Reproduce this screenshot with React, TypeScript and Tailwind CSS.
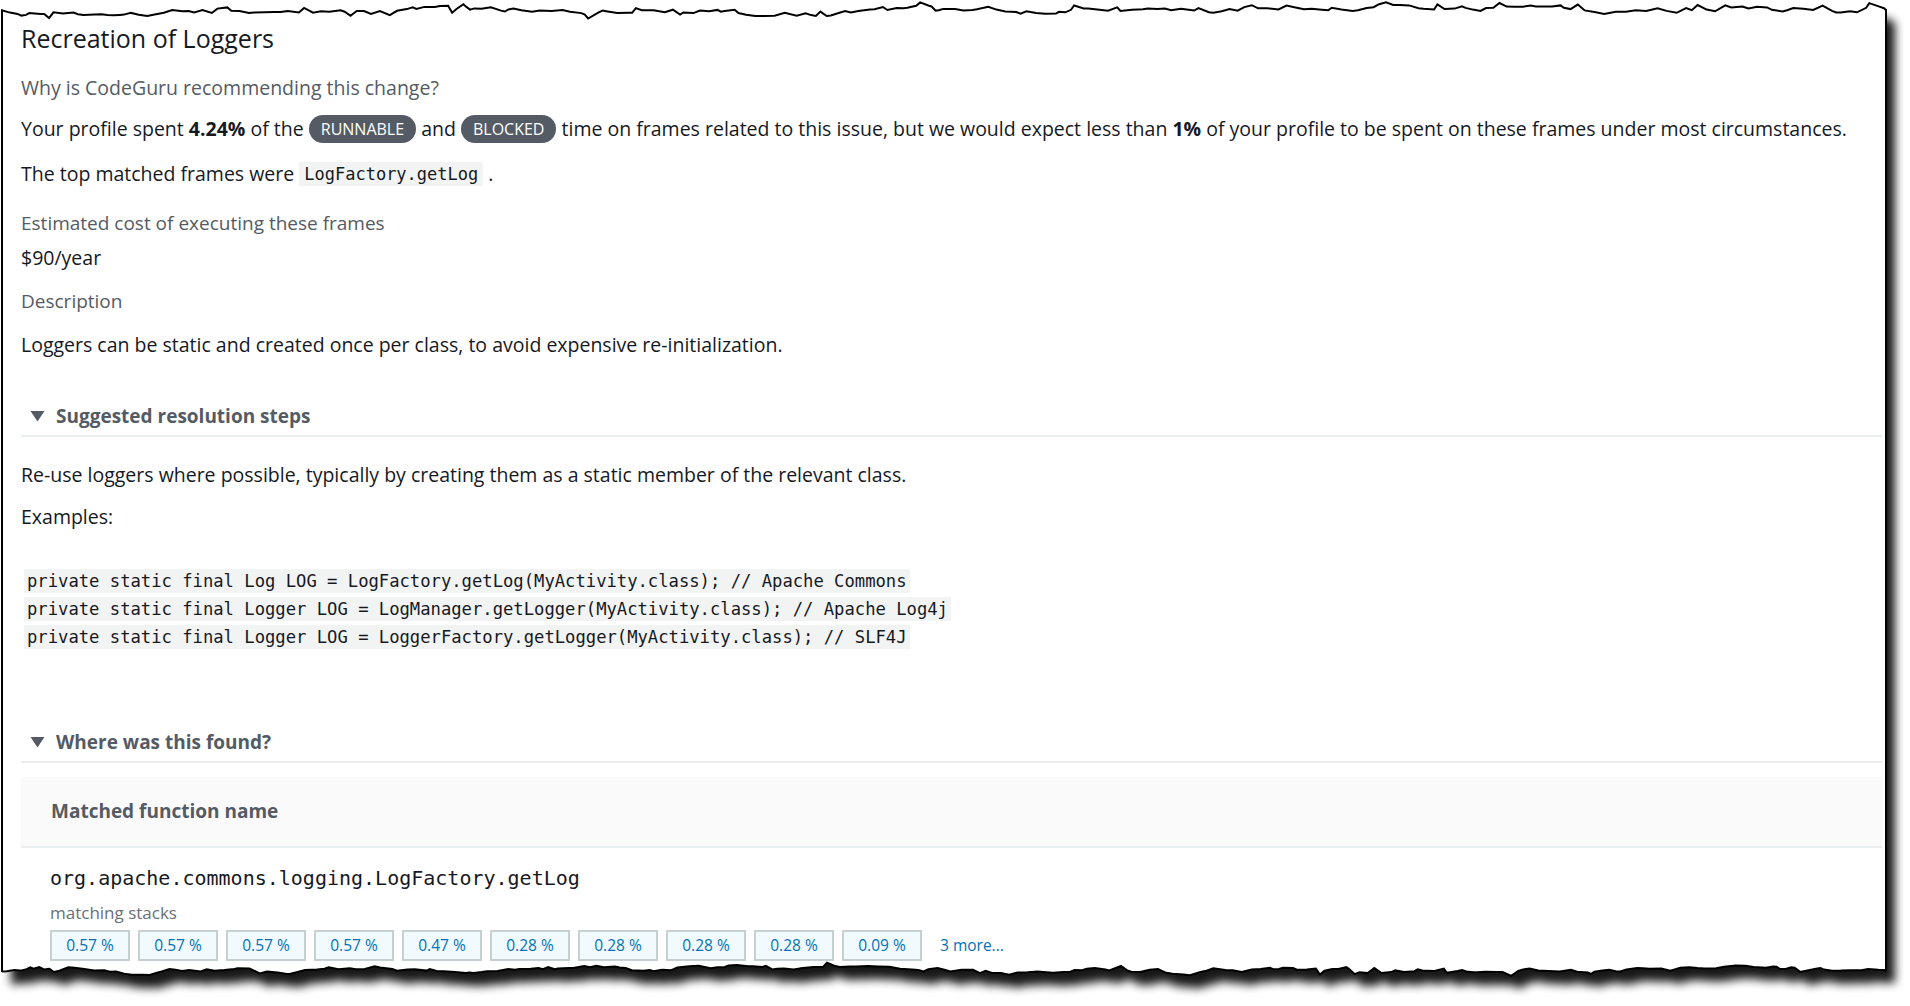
import React from "react";

function rng(seed: number) {
  let s = seed;
  return () => {
    s = (s * 1103515245 + 12345) % 2147483648;
    return s / 2147483648;
  };
}

function jagged(x0: number, x1: number, base: number, amp: number, seed: number) {
  const r = rng(seed);
  const pts: [number, number][] = [];
  let x = x0;
  let drift = 0;
  while (x < x1) {
    drift += (r() - 0.5) * amp * 0.9;
    drift = Math.max(-amp, Math.min(amp, drift * 0.85));
    const spike = r() < 0.18 ? (r() - 0.5) * amp * 1.6 : 0;
    pts.push([x, base + drift + spike]);
    x += 3 + r() * 9;
  }
  pts.push([x1, base]);
  return pts;
}

const TOP = jagged(2, 1886, 10, 6, 7);
const BOTTOM = jagged(2, 1886, 970, 5, 31);

function paperPath() {
  const top = TOP.map(([x, y]) => `${x.toFixed(1)},${y.toFixed(1)}`).join(" L");
  const bottom = [...BOTTOM]
    .reverse()
    .map(([x, y]) => `${x.toFixed(1)},${y.toFixed(1)}`)
    .join(" L");
  return `M2,12 L${top} L1886,11 L1886,972 L${bottom} L2,972 Z`;
}

function TornPaper() {
  const d = paperPath();
  return (
    <svg className="absolute inset-0" width={1910} height={1006} viewBox="0 0 1910 1006">
      <defs>
        <filter id="sh" x="-5%" y="-5%" width="110%" height="115%">
          <feGaussianBlur stdDeviation="5" />
        </filter>
      </defs>
      <path d={d} fill="#000" opacity="0.9" transform="translate(9,13)" filter="url(#sh)" />
      <path d={d} fill="#fff" stroke="#000" strokeWidth="2" strokeLinejoin="miter" />
    </svg>
  );
}

const pcts = ["0.57 %", "0.57 %", "0.57 %", "0.57 %", "0.47 %", "0.28 %", "0.28 %", "0.28 %", "0.28 %", "0.09 %"];

const mono = "font-['DejaVu_Sans_Mono','Liberation_Mono',monospace]";

function Tri() {
  return (
    <svg width="15" height="12" viewBox="0 0 15 12">
      <path d="M0.5 1 L14.5 1 L7.5 11.5 Z" fill="#545b64" />
    </svg>
  );
}

export default function App() {
  return (
    <div className="relative w-[1910px] h-[1006px] overflow-hidden bg-white font-['Open_Sans',sans-serif] text-[#16191f]">
      <TornPaper />
      <div className="relative pl-[21px] pr-[28px] pt-[23px]">
        <div className="text-[25px] leading-[30px] text-[#16191f]">Recreation of Loggers</div>
        <div className="mt-[22px] text-[19.5px] leading-[26px] text-[#545b64]">Why is CodeGuru recommending this change?</div>
        <div className="mt-[13px] h-[30px] flex items-center text-[19.5px] whitespace-nowrap">
          <span>Your profile spent&nbsp;</span>
          <b className="font-bold">4.24%</b>
          <span>&nbsp;of the&nbsp;</span>
          <span className="inline-flex items-center h-[28px] px-[12px] rounded-full bg-[#545b64] text-white text-[16px]">RUNNABLE</span>
          <span>&nbsp;and&nbsp;</span>
          <span className="inline-flex items-center h-[28px] px-[12px] rounded-full bg-[#545b64] text-white text-[16px]">BLOCKED</span>
          <span>&nbsp;time on frames related to this issue, but we would expect less than&nbsp;</span>
          <b className="font-bold">1%</b>
          <span>&nbsp;of your profile to be spent on these frames under most circumstances.</span>
        </div>
        <div className="mt-[17px] h-[26px] flex items-center text-[19.5px]">
          <span>The top matched frames were&nbsp;</span>
          <code className={`${mono} text-[17px] bg-[#f2f3f3] px-[5px] leading-[24px]`}>LogFactory.getLog</code>
          <span>&nbsp;.</span>
        </div>
        <div className="mt-[23px] text-[19px] leading-[26px] text-[#545b64]">Estimated cost of executing these frames</div>
        <div className="mt-[9px] text-[19.5px] leading-[26px]">$90/year</div>
        <div className="mt-[17px] text-[19px] leading-[26px] text-[#545b64]">Description</div>
        <div className="mt-[18px] text-[19.5px] leading-[26px]">Loggers can be static and created once per class, to avoid expensive re-initialization.</div>

        <div className="mt-[45px] h-[34px] border-b-2 border-[#eaeded] flex items-start">
          <div className="h-[26px] flex items-center pl-[9px] gap-[11px] text-[19px] font-bold text-[#545b64]">
            <Tri />
            <span>Suggested resolution steps</span>
          </div>
        </div>
        <div className="mt-[25px] text-[19.5px] leading-[26px]">Re-use loggers where possible, typically by creating them as a static member of the relevant class.</div>
        <div className="mt-[16px] text-[19.5px] leading-[26px]">Examples:</div>
        <div className={`mt-[37px] ${mono} text-[17.2px] flex flex-col items-start pl-[3px]`}>
          <div className="h-[28px] flex items-center"><span className="bg-[#f2f3f3] leading-[24px] px-[3px] whitespace-pre">private static final Log LOG = LogFactory.getLog(MyActivity.class); // Apache Commons</span></div>
          <div className="h-[28px] flex items-center"><span className="bg-[#f2f3f3] leading-[24px] px-[3px] whitespace-pre">private static final Logger LOG = LogManager.getLogger(MyActivity.class); // Apache Log4j</span></div>
          <div className="h-[28px] flex items-center"><span className="bg-[#f2f3f3] leading-[24px] px-[3px] whitespace-pre">private static final Logger LOG = LoggerFactory.getLogger(MyActivity.class); // SLF4J</span></div>
        </div>

        <div className="mt-[78px] h-[34px] border-b-2 border-[#eaeded] flex items-start">
          <div className="h-[26px] flex items-center pl-[9px] gap-[11px] text-[19px] font-bold text-[#545b64]">
            <Tri />
            <span>Where was this found?</span>
          </div>
        </div>
        <div className="mt-[14px] h-[71px] bg-[#fafafa] border-b-2 border-[#eaeded] flex items-center pl-[30px] text-[19px] font-bold text-[#545b64]">
          Matched function name
        </div>
        <div className="pl-[29px]">
          <div className={`mt-[16px] h-[28px] flex items-center ${mono} text-[20px] text-[#16191f]`}>org.apache.commons.logging.LogFactory.getLog</div>
          <div className="mt-[11px] h-[20px] flex items-center text-[17px] text-[#687078]">matching stacks</div>
          <div className="mt-[7px] flex items-center gap-[8px]">
            {pcts.map((p, i) => (
              <div key={i} className="w-[80px] h-[31px] flex items-center justify-center bg-[#f1faff] border-2 border-[#c6d0d1] text-[15.5px] text-[#0073bb]">
                {p}
              </div>
            ))}
            <span className="ml-[10px] text-[15.5px] text-[#0073bb]">3 more...</span>
          </div>
        </div>
      </div>
    </div>
  );
}
